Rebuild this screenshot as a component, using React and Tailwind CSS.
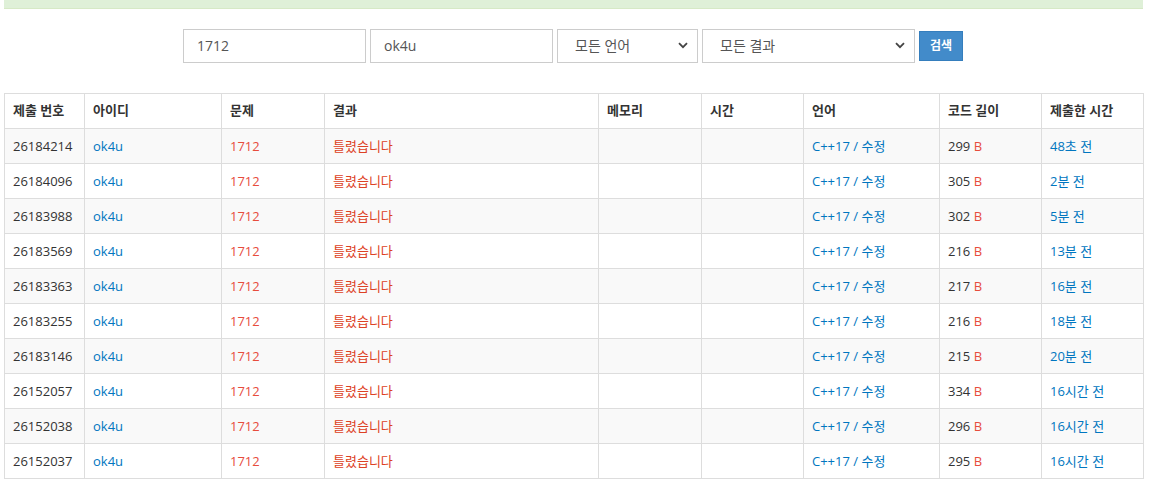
import React from 'react';

const rows = [
  ['26184214', '299', '48초 전'],
  ['26184096', '305', '2분 전'],
  ['26183988', '302', '5분 전'],
  ['26183569', '216', '13분 전'],
  ['26183363', '217', '16분 전'],
  ['26183255', '216', '18분 전'],
  ['26183146', '215', '20분 전'],
  ['26152057', '334', '16시간 전'],
  ['26152038', '296', '16시간 전'],
  ['26152037', '295', '16시간 전'],
];

const headers = ['제출 번호', '아이디', '문제', '결과', '메모리', '시간', '언어', '코드 길이', '제출한 시간'];
const widths = ['w-[80px]', 'w-[137px]', 'w-[103px]', 'w-[274px]', 'w-[103px]', 'w-[102px]', 'w-[136px]', 'w-[102px]', 'w-[102px]'];

const td = 'border border-[#ddd] px-2 pt-[2px]';

const Chevron = () => (
  <svg className="pointer-events-none absolute right-[10px] top-[13px] w-[10px] h-[7px]" viewBox="0 0 10 7">
    <path d="M1 1.2 L5 5.2 L9 1.2" fill="none" stroke="#444" strokeWidth="1.8" />
  </svg>
);

const Select = ({ label, className }) => (
  <div className={`relative h-[34px] ${className}`}>
    <div className="h-full w-full border border-[#ccc] bg-white pl-[17px] text-[14px] leading-[32px] text-[#555]">
      {label}
    </div>
    <Chevron />
  </div>
);

const App = () => {
  return (
    <div className="w-[1163px] h-[502px] bg-white text-[#333] overflow-hidden" style={{ fontFamily: '"Open Sans", "Noto Sans CJK KR", sans-serif' }}>
      <div className="ml-1 w-[1139px]">
        <div className="h-[9px] bg-[#dff0d8] border-b border-[#d6e9c6]" />

        <div className="mt-[20px] ml-[179px] flex gap-1">
          <div className="w-[183px] h-[34px] border border-[#ccc] pl-[13px] text-[14px] leading-[32px] text-[#555]">1712</div>
          <div className="w-[183px] h-[34px] border border-[#ccc] pl-[13px] text-[14px] leading-[32px] text-[#555]">ok4u</div>
          <Select label="모든 언어" className="w-[141px]" />
          <Select label="모든 결과" className="w-[213px]" />
          <button className="mt-[2px] w-[44px] h-[30px] bg-[#428bca] border border-[#357ebd] text-white text-[12px] font-bold">
            검색
          </button>
        </div>

        <table className="mt-[30px] w-[1139px] table-fixed border-collapse text-[13px]">
          <thead>
            <tr>
              {headers.map((h, i) => (
                <th key={h} className={`${widths[i]} h-[35px] border border-[#ddd] px-2 text-left font-bold text-[#333]`}>
                  {h}
                </th>
              ))}
            </tr>
          </thead>
          <tbody>
            {rows.map((r, i) => (
              <tr key={r[0]} className={i % 2 === 0 ? 'bg-[#f9f9f9]' : 'bg-white'}>
                <td className={`h-[35px] ${td}`}>{r[0]}</td>
                <td className={`${td} text-[#0076c0]`}>ok4u</td>
                <td className={`${td} text-[#e74c3c]`}>1712</td>
                <td className={`${td} text-[#dd4124]`}>틀렸습니다</td>
                <td className={td}></td>
                <td className={td}></td>
                <td className={`${td} text-[#0076c0]`}>C++17 / 수정</td>
                <td className={td}>
                  {r[1]} <span className="text-[#e74c3c]">B</span>
                </td>
                <td className={`${td} text-[#0076c0]`}>{r[2]}</td>
              </tr>
            ))}
          </tbody>
        </table>
      </div>
    </div>
  );
};

export default App;
